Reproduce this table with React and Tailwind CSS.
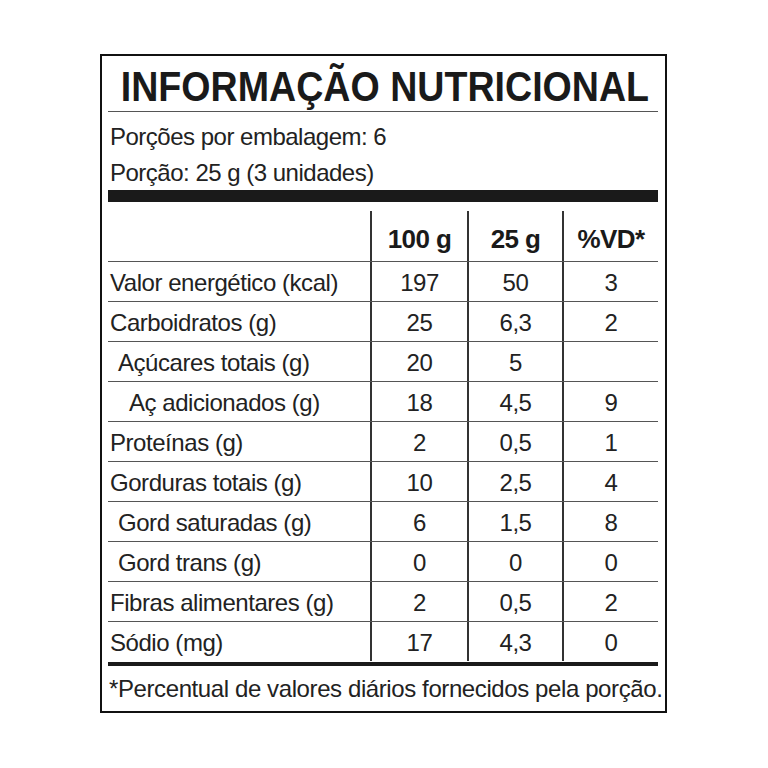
const rows = [
  { label: "Valor energético (kcal)", indent: "", a: "197", b: "50", c: "3" },
  { label: "Carboidratos (g)", indent: "", a: "25", b: "6,3", c: "2" },
  { label: "Açúcares totais (g)", indent: "pl-[10px]", a: "20", b: "5", c: "" },
  { label: "Aç adicionados (g)", indent: "pl-[21px]", a: "18", b: "4,5", c: "9" },
  { label: "Proteínas (g)", indent: "", a: "2", b: "0,5", c: "1" },
  { label: "Gorduras totais (g)", indent: "", a: "10", b: "2,5", c: "4" },
  { label: "Gord saturadas (g)", indent: "pl-[10px]", a: "6", b: "1,5", c: "8" },
  { label: "Gord trans (g)", indent: "pl-[10px]", a: "0", b: "0", c: "0" },
  { label: "Fibras alimentares (g)", indent: "", a: "2", b: "0,5", c: "2" },
  { label: "Sódio (mg)", indent: "", a: "17", b: "4,3", c: "0" },
];

const Row = ({ r }) => (
  <div className="flex h-[40px] border-t-[1.5px] border-[#555] text-[24px] leading-none tracking-[-0.45px] text-[#222] pt-[2px]">
    <div className={`w-[262px] flex items-center pl-[2px] ${r.indent}`}>{r.label}</div>
    <div className="w-[97px] border-l-2 border-[#333] -mt-[2px] pt-[2px] flex items-center justify-center">{r.a}</div>
    <div className="w-[95px] border-l-2 border-[#333] -mt-[2px] pt-[2px] flex items-center justify-center">{r.b}</div>
    <div className="w-[96px] border-l-2 border-[#333] -mt-[2px] pt-[2px] flex items-center justify-center">{r.c}</div>
  </div>
);

export default function App() {
  return (
    <div className="w-[768px] h-[768px] bg-white pt-[54px] pl-[100px] font-['Liberation_Sans',Arial,sans-serif]">
      <div className="w-[567px] h-[659px] border-2 border-[#111] pl-[6px] pr-[7px] flex flex-col">
        <div className="h-[56px] flex items-center justify-center border-b-[1.5px] border-[#555]">
          <span className="inline-block whitespace-nowrap text-[42px] leading-none font-bold text-[#1a1a1a] scale-x-[0.895] pt-[7px] pl-[4px]">
            INFORMAÇÃO NUTRICIONAL
          </span>
        </div>
        <div className="h-[78px] flex flex-col justify-center pt-[8px] pl-[2px] text-[24px] leading-[36px] tracking-[-0.5px] text-[#222]">
          <div>Porções por embalagem: 6</div>
          <div>Porção: 25 g (3 unidades)</div>
        </div>
        <div className="h-[12px] bg-[#1a1a1a]" />
        <div className="flex h-[59px] items-end">
          <div className="w-[262px]" />
          <div className="w-[97px] h-[50px] pt-[6px] border-l-2 border-[#333] flex items-center justify-center text-[26px] font-bold tracking-[-0.6px] text-[#1a1a1a]">100 g</div>
          <div className="w-[95px] h-[50px] pt-[6px] border-l-2 border-[#333] flex items-center justify-center text-[26px] font-bold tracking-[-0.6px] text-[#1a1a1a]">25 g</div>
          <div className="w-[96px] h-[50px] pt-[6px] border-l-2 border-[#333] flex items-center justify-center text-[26px] font-bold tracking-[-0.6px] text-[#1a1a1a]">%VD*</div>
        </div>
        {rows.map((r) => (
          <Row key={r.label} r={r} />
        ))}
        <div className="h-[4px] bg-[#1a1a1a] mt-[1px]" />
        <div className="flex-1 flex items-center pl-[1px] text-[24px] tracking-[-0.4px] text-[#222] whitespace-nowrap">
          *Percentual de valores diários fornecidos pela porção.
        </div>
      </div>
    </div>
  );
}
